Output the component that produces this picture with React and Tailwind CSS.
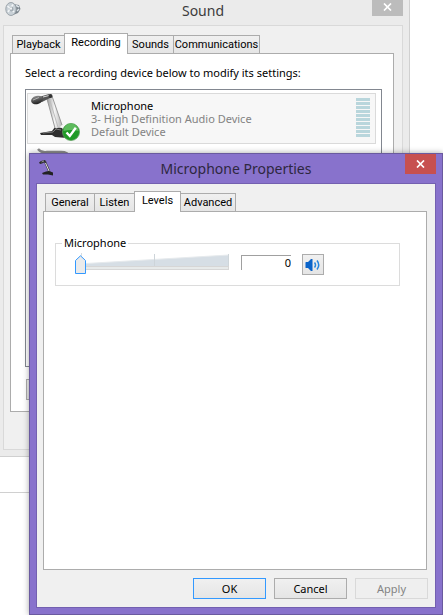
import React, { useState } from 'react';
import clsx from 'clsx';

const METER_BARS = [0, 1, 2, 3, 4, 5, 6, 7, 8, 9];

const MicIcon = ({ className }) => (
  <svg viewBox="0 0 50 50" className={className} aria-hidden="true">
    <defs>
      <linearGradient id="micStem" x1="0" y1="0" x2="1" y2="0">
        <stop offset="0" stopColor="#9a9a9a" />
        <stop offset="0.5" stopColor="#f4f4f4" />
        <stop offset="1" stopColor="#b5b5b5" />
      </linearGradient>
      <linearGradient id="micHead" x1="0" y1="0" x2="0" y2="1">
        <stop offset="0" stopColor="#8d8d8d" />
        <stop offset="1" stopColor="#1d1d1d" />
      </linearGradient>
    </defs>
    <path d="M9 39 L21 37 L24 33 L31 34 L35 40 L36 44 L24 43 L21 41 L10 41 Z" fill="#2f2f2f" />
    <path d="M12 39 L22 38 L25 35 L30 36" stroke="#7d7d7d" strokeWidth="1" fill="none" />
    <path d="M16 5 L21 2 L31 31 Q28 35 24 34 Z" fill="url(#micStem)" />
    <path d="M16 5 L24 34 M21 2 L31 31" stroke="#9a9a9a" strokeWidth="1" />
    <path d="M19 7 L27 33" stroke="#bdbdbd" strokeWidth="1" />
    <path d="M8 3 L18 0 L21 3 L11 8 Z" fill="#555" />
    <path d="M12 3 L18 1.5" stroke="#d8d8d8" strokeWidth="1" />
    <ellipse cx="6" cy="6" rx="6" ry="4.2" transform="rotate(-14 6 6)" fill="url(#micHead)" />
    <path d="M2 6 L8 3.5" stroke="#b0b0b0" strokeWidth="1" />
    <circle cx="19.5" cy="2" r="2" fill="#333" />
  </svg>
);

// simplified version for the title bar
const SmallMicIcon = () => (
  <svg viewBox="0 0 16 16" className="mt-[6px] ml-[3px] size-4" aria-hidden="true">
    <path d="M0 2.5 L2 1 L6 0 L7 1.5 L3 3.5 L1 4 Z" fill="#2b2b2b" />
    <path d="M2.5 2 L5 1" stroke="#aaa" strokeWidth="0.8" />
    <path d="M6 1.5 L10.5 12" stroke="#3a3a3a" strokeWidth="2" />
    <path d="M6.5 3 L10.3 11.5" stroke="#e2e2e2" strokeWidth="1" />
    <path d="M3 13 L7 11.5 L10 11 L14 12.5 L14 15.5 L9 14.5 L4 14.5 Z" fill="#222" />
  </svg>
);

const CheckBadge = () => (
  <svg viewBox="0 0 18 18" className="absolute left-[34px] top-[29px] size-[18px]" aria-hidden="true">
    <circle cx="9" cy="9" r="8.5" fill="#1f9a26" stroke="#5f9f5f" strokeWidth="0.8" />
    <path d="M1.5 8 A7.5 7.5 0 0 1 16.5 8 Q9 6 1.5 8Z" fill="#5dbb5d" />
    <path d="M4.5 9.5 L7.8 13 L13.8 4.8" stroke="#fff" strokeWidth="2.4" fill="none" />
  </svg>
);

const SoundIcon = () => (
  <svg viewBox="0 0 16 16" className="absolute left-[5px] top-px size-4" aria-hidden="true">
    <path d="M8 3 L14 4 L15.5 8 L13 12 L8 14 Z" fill="#7c868e" />
    <path d="M11 4.5 L14 6 M12 10 L14 8" stroke="#dce3e8" strokeWidth="1.4" />
    <ellipse cx="6" cy="8" rx="5.2" ry="6.5" fill="#c9d1d7" stroke="#949da4" strokeWidth="0.9" />
    <path d="M2.5 5 L9 11 M3 11 L8 3.5" stroke="#f3f6f8" strokeWidth="1.4" />
    <ellipse cx="6.5" cy="8" rx="2" ry="2.6" fill="#a4adb4" />
    <ellipse cx="6" cy="7.5" rx="1" ry="1.3" fill="#f7f9fa" />
  </svg>
);

const CloseIcon = () => (
  <svg viewBox="0 0 9 8" className="h-2 w-[9px]" aria-hidden="true">
    <path d="M1 0.5 L8 7.5 M8 0.5 L1 7.5" stroke="#fff" strokeWidth="1.7" />
  </svg>
);

const Tabs = ({ items, active, onChange }) => (
  <div role="tablist" className="flex h-5 items-end pl-[2px]">
    {items.map((item, i) => (
      <button
        key={item.label}
        type="button"
        role="tab"
        aria-selected={active === item.label}
        onClick={() => onChange(item.label)}
        className={clsx(
          "flex justify-center whitespace-nowrap border border-b-0 border-[#acacac] font-['Roboto','Noto_Sans',sans-serif] text-[11px] leading-[18px]",
          item.width,
          i > 0 && '-ml-px',
          active === item.label
            ? 'relative z-10 -mb-px h-[21px] bg-white'
            : 'h-[18px] bg-linear-to-b from-[#f0f0f0] to-[#e5e5e5]'
        )}
      >
        {item.label}
      </button>
    ))}
  </div>
);

const PushButton = ({ children, isDefault, disabled }) => (
  <button
    type="button"
    disabled={disabled}
    className={clsx(
      'h-[21px] w-[73px] border text-[11px] leading-4',
      disabled
        ? 'border-[#d9d9d9] bg-[#efefef] text-[#838383]'
        : 'bg-linear-to-b from-[#f0f0f0] to-[#e5e5e5]',
      !disabled && (isDefault ? 'border-[#3399ff]' : 'border-[#acacac]')
    )}
  >
    {children}
  </button>
);

const LevelSlider = ({ value, onChange }) => (
  <div className="relative mt-px h-6 w-[156px]">
    <svg viewBox="0 0 156 24" className="h-6 w-[156px]" aria-hidden="true">
      <path d="M4 12 L155 3 V14 H4 Z" fill="#d6dee5" />
      <path d="M4 12 L155 3" stroke="#e6eaed" strokeWidth="1" />
      <rect x="80" y="2" width="1" height="12" fill="#cdd4d9" />
      <rect x="7" y="1" width="1" height="3" fill="#d8dde0" />
      <rect x="154" y="2" width="1" height="12" fill="#cfd6da" />
      <rect x="4.5" y="14.5" width="150" height="3" fill="#e7eaea" stroke="#d6d6d6" />
    </svg>
    <svg
      viewBox="0 0 11 20"
      className="absolute top-[3px] h-5 w-[11px]"
      style={{ left: 1 + value * 1.43 }}
      aria-hidden="true"
    >
      <path d="M0.5 5.5 L5.5 0.8 L10.5 5.5 V18.5 H0.5 Z" fill="#ebebeb" stroke="#3399ff" />
    </svg>
    <input
      type="range"
      id="level"
      min="0"
      max="100"
      value={value}
      onChange={(e) => onChange(Number(e.target.value))}
      aria-label="Microphone"
      className="absolute inset-0 h-6 w-full opacity-0"
    />
  </div>
);

const SoundWindow = () => {
  const [tab, setTab] = useState('Recording');
  const tabs = [
    { label: 'Playback', width: 'w-[53px]' },
    { label: 'Recording', width: 'w-16' },
    { label: 'Sounds', width: 'w-[47px]' },
    { label: 'Communications', width: 'w-[87px]' },
  ];

  return (
    <section className="mr-[33px] border-r border-b border-[#d0d0d0] bg-[#ebebeb] pr-[6px] pb-[6px] pl-[3px]">
      <header className="flex h-[25px] items-start justify-center">
        <SoundIcon />
        <h1 className="flex-1 pl-[31px] text-center text-[14px] leading-[22px] text-[#3c3c3c]">Sound</h1>
        <button type="button" aria-label="Close" className="flex h-4 w-[31px] items-center justify-center bg-[#bcbcbc] pb-[2px]">
          <CloseIcon />
        </button>
      </header>
      <div className="border border-[#d9d9d9] bg-[#f0f0f0] pt-[7px] pr-2 pb-[37px] pl-[6px]">
        <Tabs items={tabs} active={tab} onChange={setTab} />
        <div className="border border-[#acacac] bg-white pt-[11px] pr-[11px] pb-[11px] pl-[14px]">
          <p className="text-[11px] leading-4">Select a recording device below to modify its settings:</p>
          <ul className="mt-2 h-[278px] border border-[#828790] pt-[3px] pr-[5px] pl-px">
            <li className="relative flex h-[51px] items-start border border-[#dadada] bg-[#f7f7f7] pr-[5px]">
              <MicIcon className="ml-[3px] size-[50px] shrink-0" />
              <CheckBadge />
              <div className="ml-[10px] flex-1 pt-[5px] text-[11px] leading-[13px] text-[#838383]">
                <p className="text-black">Microphone</p>
                <p>3- High Definition Audio Device</p>
                <p>Default Device</p>
              </div>
              <div className="flex flex-col gap-px pt-1">
                {METER_BARS.map((bar) => (
                  <span key={bar} className="h-[3px] w-[14px] bg-[#b9d6dc]" />
                ))}
              </div>
            </li>
            <li className="h-[51px] pt-[4px] pl-[10px]">
              <svg viewBox="0 0 36 20" className="h-5 w-9" aria-hidden="true">
                <path d="M1 1 Q4 5 10 4 H24 Q31 4 33 9" stroke="#8c8c8c" strokeWidth="2.4" fill="none" />
              </svg>
            </li>
          </ul>
          <div className="mt-3 ml-px flex">
            <PushButton>Configure</PushButton>
          </div>
        </div>
      </div>
    </section>
  );
};

const PropertiesDialog = () => {
  const [tab, setTab] = useState('Levels');
  const [level, setLevel] = useState(0);
  const tabs = [
    { label: 'General', width: 'w-[50px]' },
    { label: 'Listen', width: 'w-[41px]' },
    { label: 'Levels', width: 'w-[47px]' },
    { label: 'Advanced', width: 'w-[56px]' },
  ];

  return (
    <section className="absolute top-[153px] right-0 left-[29px] z-20 border border-[#6a5a9f] bg-[#8872cc] px-[6px] pb-[6px] shadow-[0_0_6px_rgba(0,0,0,0.35)]">
      <header className="flex h-[29px] items-start">
        <SmallMicIcon />
        <h2 className="flex-1 pl-3 text-center text-[14px] leading-[29px] text-[#2e2740]">Microphone Properties</h2>
        <button type="button" aria-label="Close" className="flex h-5 w-[31px] items-center justify-center bg-[#c75050]">
          <CloseIcon />
        </button>
      </header>
      <div className="border border-[#7360b0] bg-[#f0f0f0] pt-[7px] pr-2 pb-2 pl-[6px]">
        <Tabs items={tabs} active={tab} onChange={setTab} />
        <div className="h-[359px] border border-[#acacac] bg-white pt-[23px] pr-[26px] pl-[11px]">
          <fieldset className="h-[51px] border border-[#dcdcdc]">
            <legend className="ml-[6px] px-[2px] text-[11px] leading-4">Microphone</legend>
            <div className="flex items-start gap-[11px] pl-[18px]">
              <LevelSlider value={level} onChange={setLevel} />
              <input
                type="text"
                aria-label="Level"
                readOnly
                value={level}
                className="mt-1 h-[15px] w-[50px] border-t border-l border-[#a0a0a0] pb-px text-right text-[11px] leading-[14px] outline-none"
              />
              <button
                type="button"
                aria-label="Mute"
                className="mt-[3px] flex h-[21px] w-[22px] items-center justify-center border border-[#acacac] bg-linear-to-b from-[#f0f0f0] to-[#e5e5e5]"
              >
                <svg viewBox="0 0 16 14" className="h-[14px] w-4" aria-hidden="true">
                  <path d="M0.5 4.5 Q0.5 4 1 4 H3 L6 1 H7.5 V13 H6 L3 10 H1 Q0.5 10 0.5 9.5 Z" fill="#0a63c9" />
                  <path d="M9.5 4.5 Q11.5 7 9.5 9.5 M12 2.5 Q15.5 7 12 11.5" stroke="#2484df" strokeWidth="1.5" fill="none" />
                </svg>
              </button>
            </div>
          </fieldset>
        </div>
        <div className="-mr-px mt-2 flex justify-end gap-2">
          <PushButton isDefault>OK</PushButton>
          <PushButton>Cancel</PushButton>
          <PushButton disabled>Apply</PushButton>
        </div>
      </div>
    </section>
  );
};

const App = () => (
  <main className="relative min-h-screen overflow-hidden bg-white font-['Noto_Sans','Open_Sans',sans-serif] text-black">
    <SoundWindow />
    <div className="h-9 border-b border-[#d0d0d0]" />
    <PropertiesDialog />
  </main>
);

export default App;
